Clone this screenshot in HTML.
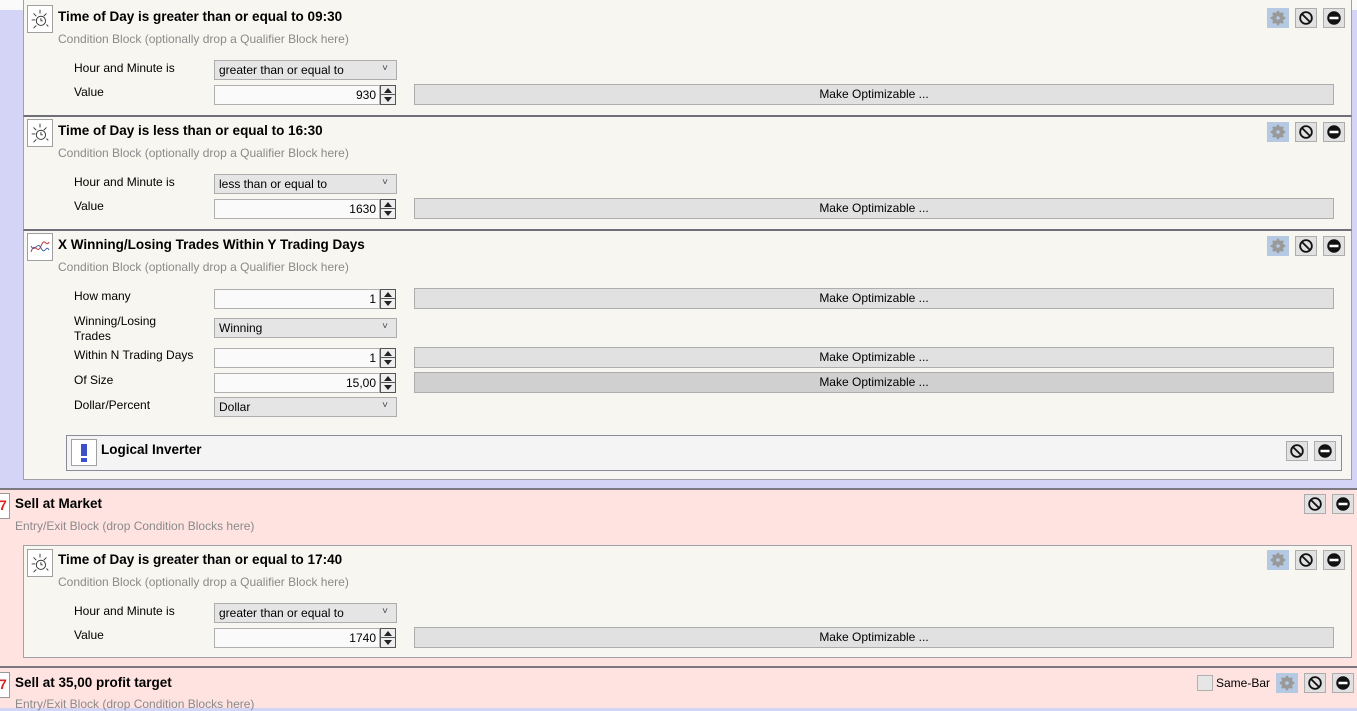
<!DOCTYPE html><html><head><style>
*{box-sizing:border-box;margin:0;padding:0}
body{width:1357px;height:708px;overflow:hidden;position:relative;background:#d4d4f6;font-family:"Liberation Sans",sans-serif;font-size:12px;color:#000}
.a{position:absolute}
.card{position:absolute;background:#f8f6f0;border:1px solid #a0a0a8}
.t{position:absolute;font-weight:bold;font-size:13.5px;white-space:nowrap}
.s{position:absolute;color:#8a8a8a;font-size:12px;white-space:nowrap}
.l{position:absolute;font-size:12px;white-space:nowrap;line-height:15px}
.sel{position:absolute;width:183px;height:20px;background:#e5e5e5;border:1px solid #adadad;padding:2px 4px;font-size:12px}
.sel:after{content:"˅";position:absolute;right:8px;top:2px;font-size:10px;color:#444}
.inp{position:absolute;width:166px;height:20px;background:#fafafa;border:1px solid #b0b0b0;text-align:right;padding:2px 3px;font-size:12px}
.sp{position:absolute;width:16px;height:20px;border:1px solid #555;background:#eee}
.sp:before,.sp:after{content:"";position:absolute;left:3px;border-left:4px solid transparent;border-right:4px solid transparent}
.sp:before{top:2px;border-bottom:5px solid #222}
.sp:after{bottom:2px;border-top:5px solid #222}
.sp i{position:absolute;left:0;right:0;top:8px;border-top:1px solid #555}
.btn{position:absolute;left:414px;width:920px;height:21px;background:#e1e1e1;border:1px solid #adadad;text-align:center;line-height:19px;font-size:12px}
.ib{position:absolute;width:22px;height:20px;background:#e1e1e1;border:1px solid #adadad}
.g{background:#b5c9e2;border-color:#b5c9e2}
.ico{position:absolute;width:26px;height:28px;background:#fff;border:1px solid #a0a0a0}
</style></head><body>
<div class="a" style="left:0;top:0;width:1357px;height:10px;background:#fafafa"></div>
<div class="a" style="left:480px;top:-5px;color:#999;font-size:11.5px">(Drop Entry/Exit building blocks in this upper area to insert them at the top)</div>

<svg width="0" height="0" style="position:absolute"><defs>
<symbol id="gear" viewBox="0 0 20 20"><circle cx="10" cy="10" r="5" fill="none" stroke="#999" stroke-width="3"/><g stroke="#999" stroke-width="2.5"><line x1="10" y1="2" x2="10" y2="18"/><line x1="2" y1="10" x2="18" y2="10"/><line x1="4.3" y1="4.3" x2="15.7" y2="15.7"/><line x1="15.7" y1="4.3" x2="4.3" y2="15.7"/></g><circle cx="10" cy="10" r="2" fill="#b5c9e2"/></symbol>
<symbol id="no" viewBox="0 0 20 20"><circle cx="10" cy="10" r="6.5" fill="none" stroke="#111" stroke-width="2"/><line x1="5.5" y1="5.5" x2="14.5" y2="14.5" stroke="#111" stroke-width="2"/></symbol>
<symbol id="mn" viewBox="0 0 20 20"><circle cx="10" cy="10" r="7.5" fill="#111"/><rect x="5" y="8.6" width="10" height="2.8" fill="#fff"/></symbol>
<symbol id="clk" viewBox="0 0 26 28"><g stroke="#333" stroke-width="1" fill="none"><circle cx="14" cy="16" r="5"/><path d="M14 13v3h2"/><path d="M13 4v4M6 8l3 3M4 15h4M20 8l-3 3M9 21l-3 3M20 20l2 2"/></g></symbol>
</defs></svg>

<!-- card1 -->
<div class="card" style="left:23px;top:-2px;width:1329px;height:119px;border-bottom:2px solid #6f6f78"></div>
<div class="ico" style="left:27px;top:5px"><svg width="24" height="26"><use href="#clk"/></svg></div>
<div class="t" style="left:58px;top:9px">Time of Day is greater than or equal to 09:30</div>
<div class="s" style="left:58px;top:32px">Condition Block (optionally drop a Qualifier Block here)</div>
<div class="l" style="left:74px;top:61px">Hour and Minute is</div>
<div class="sel" style="left:214px;top:60px">greater than or equal to</div>
<div class="l" style="left:74px;top:85px">Value</div>
<div class="inp" style="left:214px;top:85px">930</div><div class="sp" style="left:380px;top:85px"><i></i></div>
<div class="btn" style="top:84px">Make Optimizable ...</div>
<div class="ib g" style="left:1267px;top:8px"><svg width="20" height="18"><use href="#gear"/></svg></div>
<div class="ib" style="left:1295px;top:8px"><svg width="20" height="18"><use href="#no"/></svg></div>
<div class="ib" style="left:1323px;top:8px"><svg width="20" height="18"><use href="#mn"/></svg></div>

<!-- card2 -->
<div class="card" style="left:23px;top:117px;width:1329px;height:114px;border-top:0;border-bottom:2px solid #6f6f78"></div>
<div class="ico" style="left:27px;top:119px"><svg width="24" height="26"><use href="#clk"/></svg></div>
<div class="t" style="left:58px;top:123px">Time of Day is less than or equal to 16:30</div>
<div class="s" style="left:58px;top:146px">Condition Block (optionally drop a Qualifier Block here)</div>
<div class="l" style="left:74px;top:175px">Hour and Minute is</div>
<div class="sel" style="left:214px;top:174px">less than or equal to</div>
<div class="l" style="left:74px;top:199px">Value</div>
<div class="inp" style="left:214px;top:199px">1630</div><div class="sp" style="left:380px;top:199px"><i></i></div>
<div class="btn" style="top:198px">Make Optimizable ...</div>
<div class="ib g" style="left:1267px;top:122px"><svg width="20" height="18"><use href="#gear"/></svg></div>
<div class="ib" style="left:1295px;top:122px"><svg width="20" height="18"><use href="#no"/></svg></div>
<div class="ib" style="left:1323px;top:122px"><svg width="20" height="18"><use href="#mn"/></svg></div>

<!-- card3 -->
<div class="card" style="left:23px;top:231px;width:1329px;height:249px;border-top:0"></div>
<div class="ico" style="left:27px;top:233px"><svg width="24" height="26"><path d="M3 18c4-12 6 4 10-6s5 2 8-4" stroke="#c33" fill="none"/><path d="M3 12c4 8 6-6 10 2s5-4 8 2" stroke="#46a" fill="none"/></svg></div>
<div class="t" style="left:58px;top:237px">X Winning/Losing Trades Within Y Trading Days</div>
<div class="s" style="left:58px;top:260px">Condition Block (optionally drop a Qualifier Block here)</div>
<div class="l" style="left:74px;top:289px">How many</div>
<div class="inp" style="left:214px;top:289px">1</div><div class="sp" style="left:380px;top:289px"><i></i></div>
<div class="btn" style="top:288px">Make Optimizable ...</div>
<div class="l" style="left:74px;top:314px">Winning/Losing<br>Trades</div>
<div class="sel" style="left:214px;top:318px">Winning</div>
<div class="l" style="left:74px;top:348px">Within N Trading Days</div>
<div class="inp" style="left:214px;top:348px">1</div><div class="sp" style="left:380px;top:348px"><i></i></div>
<div class="btn" style="top:347px">Make Optimizable ...</div>
<div class="l" style="left:74px;top:373px">Of Size</div>
<div class="inp" style="left:214px;top:373px">15,00</div><div class="sp" style="left:380px;top:373px"><i></i></div>
<div class="btn" style="top:372px;background:#d0d0d0">Make Optimizable ...</div>
<div class="l" style="left:74px;top:398px">Dollar/Percent</div>
<div class="sel" style="left:214px;top:397px">Dollar</div>
<div class="ib g" style="left:1267px;top:236px"><svg width="20" height="18"><use href="#gear"/></svg></div>
<div class="ib" style="left:1295px;top:236px"><svg width="20" height="18"><use href="#no"/></svg></div>
<div class="ib" style="left:1323px;top:236px"><svg width="20" height="18"><use href="#mn"/></svg></div>
<div class="a" style="left:66px;top:435px;width:1276px;height:36px;background:#f4f4f4;border:1px solid #8a8a98"></div>
<div class="ico" style="left:71px;top:439px;height:27px"><div class="a" style="left:9px;top:4px;width:6px;height:12px;background:#3c50c8"></div><div class="a" style="left:9px;top:18px;width:6px;height:4px;background:#3c50c8"></div></div>
<div class="t" style="left:101px;top:442px">Logical Inverter</div>
<div class="ib" style="left:1286px;top:441px"><svg width="20" height="18"><use href="#no"/></svg></div>
<div class="ib" style="left:1314px;top:441px"><svg width="20" height="18"><use href="#mn"/></svg></div>

<!-- pink 1 -->
<div class="a" style="left:0;top:488px;width:1357px;height:180px;background:#ffe3e1;border-top:2px solid #7a7a80;border-bottom:2px solid #7a7a80"></div>
<div class="a" style="left:-2px;top:493px;width:12px;height:26px;background:#fff;border:1px solid #999;color:#d22;font-weight:bold;font-size:14px;line-height:22px">7</div>
<div class="t" style="left:15px;top:496px">Sell at Market</div>
<div class="s" style="left:15px;top:519px">Entry/Exit Block (drop Condition Blocks here)</div>
<div class="ib" style="left:1304px;top:494px"><svg width="20" height="18"><use href="#no"/></svg></div>
<div class="ib" style="left:1332px;top:494px"><svg width="20" height="18"><use href="#mn"/></svg></div>

<div class="card" style="left:23px;top:545px;width:1329px;height:113px"></div>
<div class="ico" style="left:27px;top:549px"><svg width="24" height="26"><use href="#clk"/></svg></div>
<div class="t" style="left:58px;top:552px">Time of Day is greater than or equal to 17:40</div>
<div class="s" style="left:58px;top:575px">Condition Block (optionally drop a Qualifier Block here)</div>
<div class="l" style="left:74px;top:604px">Hour and Minute is</div>
<div class="sel" style="left:214px;top:603px">greater than or equal to</div>
<div class="l" style="left:74px;top:628px">Value</div>
<div class="inp" style="left:214px;top:628px">1740</div><div class="sp" style="left:380px;top:628px"><i></i></div>
<div class="btn" style="top:627px">Make Optimizable ...</div>
<div class="ib g" style="left:1267px;top:550px"><svg width="20" height="18"><use href="#gear"/></svg></div>
<div class="ib" style="left:1295px;top:550px"><svg width="20" height="18"><use href="#no"/></svg></div>
<div class="ib" style="left:1323px;top:550px"><svg width="20" height="18"><use href="#mn"/></svg></div>

<!-- pink 2 -->
<div class="a" style="left:0;top:668px;width:1357px;height:40px;background:#ffe3e1"></div>
<div class="a" style="left:-2px;top:672px;width:12px;height:26px;background:#fff;border:1px solid #999;color:#d22;font-weight:bold;font-size:14px;line-height:22px">7</div>
<div class="t" style="left:15px;top:675px">Sell at 35,00 profit target</div>
<div class="s" style="left:15px;top:697px">Entry/Exit Block (drop Condition Blocks here)</div>
<div class="a" style="left:1197px;top:675px;width:16px;height:16px;background:#e6e6e6;border:1px solid #b0b0b0"></div>
<div class="l" style="left:1216px;top:676px">Same-Bar</div>
<div class="ib g" style="left:1276px;top:673px"><svg width="20" height="18"><use href="#gear"/></svg></div>
<div class="ib" style="left:1304px;top:673px"><svg width="20" height="18"><use href="#no"/></svg></div>
<div class="ib" style="left:1332px;top:673px"><svg width="20" height="18"><use href="#mn"/></svg></div>
</body></html>
